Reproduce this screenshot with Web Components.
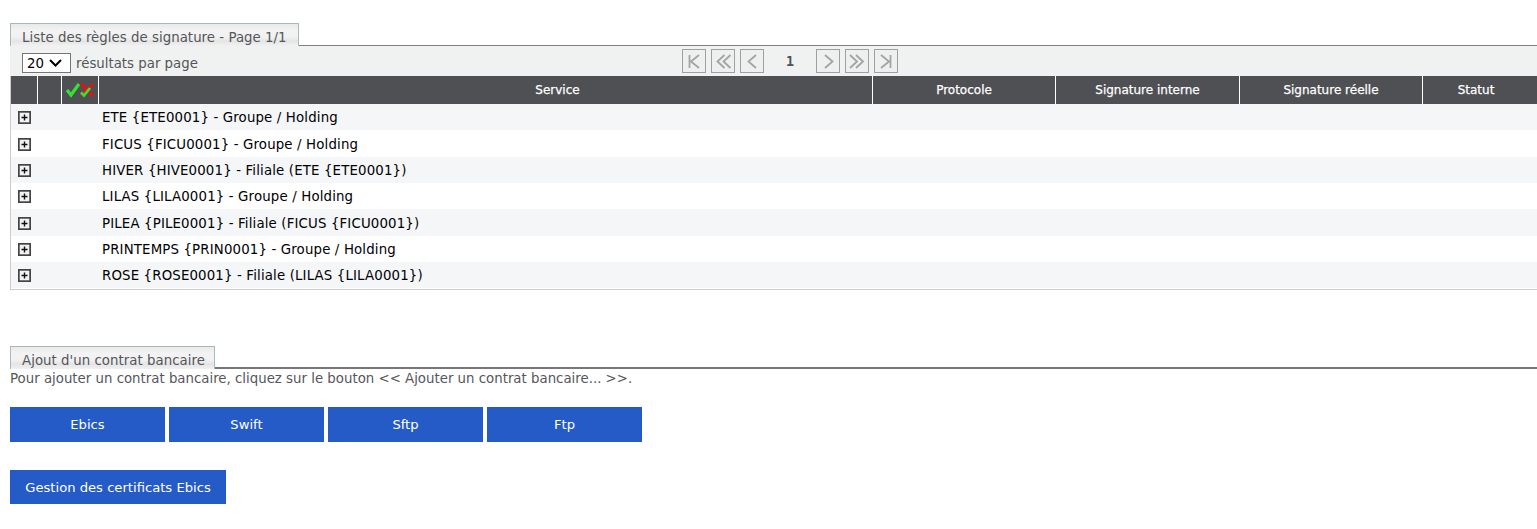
<!DOCTYPE html>
<html lang="fr">
<head>
<meta charset="utf-8">
<title>Règles de signature</title>
<style>
html,body{margin:0;padding:0;background:#fff}
body{padding:23px 0 0 10px;font:13.33px "DejaVu Sans",Verdana,sans-serif;color:#4f5054;height:506px;overflow:hidden}
</style>
</head>
<body>
<onglet-titre largeur="289" style="--ligne:#808080">Liste des règles de signature - Page 1/1</onglet-titre>
<barre-page></barre-page>
<table-regles>
  <ligne-regle>ETE {ETE0001} - Groupe / Holding</ligne-regle>
  <ligne-regle>FICUS {FICU0001} - Groupe / Holding</ligne-regle>
  <ligne-regle>HIVER {HIVE0001} - Filiale (ETE {ETE0001})</ligne-regle>
  <ligne-regle>LILAS {LILA0001} - Groupe / Holding</ligne-regle>
  <ligne-regle>PILEA {PILE0001} - Filiale (FICUS {FICU0001})</ligne-regle>
  <ligne-regle>PRINTEMPS {PRIN0001} - Groupe / Holding</ligne-regle>
  <ligne-regle>ROSE {ROSE0001} - Filiale (LILAS {LILA0001})</ligne-regle>
</table-regles>
<onglet-titre largeur="205" style="margin-top:56px;--ligne:#777;--epais:2px">Ajout d'un contrat bancaire</onglet-titre>
<texte-info>Pour ajouter un contrat bancaire, cliquez sur le bouton &lt;&lt; Ajouter un contrat bancaire... &gt;&gt;.</texte-info>
<groupe-boutons>
  <bouton-bleu>Ebics</bouton-bleu>
  <bouton-bleu>Swift</bouton-bleu>
  <bouton-bleu>Sftp</bouton-bleu>
  <bouton-bleu>Ftp</bouton-bleu>
</groupe-boutons>
<bouton-bleu large>Gestion des certificats Ebics</bouton-bleu>

<script>
class OngletTitre extends HTMLElement{
    constructor(){
        super()
        this.attachShadow({mode:'open'})
    }
    connectedCallback(){
        let w = this.getAttribute("largeur") || 200
        this.shadowRoot.innerHTML=`
        <style>
            :host{display:flex;height:23px;align-items:flex-end;position:relative}
            .tab{box-sizing:border-box;width:${w}px;height:23px;border:1px solid #a9b8bd;border-bottom:0;padding:6px 0 0 11px;
                background:linear-gradient(#e9e9e9,#f3f3f3 30%,#f1f1f1 60%,#e4e4e4 78%,#f0f2f1);font-size:13.33px;line-height:16px;color:#55565a;white-space:nowrap;letter-spacing:.03px}
            .ligne{flex:1;border-bottom:var(--epais,1px) solid var(--ligne,#808080)}
        </style>
        <div class="tab"><slot></slot></div><div class="ligne"></div>
        `
    }
}
customElements.define("onglet-titre",OngletTitre)

const fleches = {
    first:'<path d="M6.500 5v13M16 5l-8 6.500 8 6.500"/>',
    prev2:'<path d="M12.500 5l-7 6.500 7 6.500M18.500 5l-7 6.500 7 6.500"/>',
    prev:'<path d="M15 5l-7.500 6.500L15 18"/>',
    next:'<path d="M8 5l7.500 6.500L8 18"/>',
    next2:'<path d="M4 5l7 6.500-7 6.500M10 5l7 6.500-7 6.500"/>',
    last:'<path d="M6 5l8 6.500L6 18M15.500 5v13"/>'
}

class BoutonPage extends HTMLElement{
    constructor(){
        super()
        this.attachShadow({mode:'open'})
    }
    connectedCallback(){
        this.shadowRoot.innerHTML=`
        <style>
            :host{display:block;box-sizing:border-box;width:24px;height:24px;border:1px solid #a0a0a0;background:#eef0ef}
            svg{display:block;width:22px;height:22px;fill:none;stroke:#a3a3a3;stroke-width:1.8}
        </style>
        <svg viewBox="0 0 22 22">${fleches[this.getAttribute("sens")]}</svg>
        `
    }
}
customElements.define("bouton-page",BoutonPage)

class BarrePage extends HTMLElement{
    constructor(){
        super()
        this.attachShadow({mode:'open'})
    }
    connectedCallback(){
        this.shadowRoot.innerHTML=`
        <style>
            :host{display:block;height:30px;background:#f0f2f1;position:relative;margin-bottom:0}
            .gauche{position:absolute;left:12px;top:7px;display:flex;align-items:center;gap:5px;font-size:13.33px;color:#55565a}
            .choix{box-sizing:border-box;width:49px;height:20px;border:1px solid #767676;background:#fff;color:#000;display:flex;align-items:center;padding-left:4px;gap:5px}
            .choix svg{width:13px;height:8px;fill:none;stroke:#000;stroke-width:2}
            .pages{position:absolute;left:672px;top:3px;display:flex;gap:5px}
            .num{width:42px;text-align:center;font-weight:bold;font-size:13.33px;line-height:25px;color:#4f5054;font-family:"DejaVu Sans Mono","DejaVu Sans",monospace}
        </style>
        <div class="gauche">
            <div class="choix">20<svg viewBox="0 0 13 8"><path d="M1 1l5.500 5.500L12 1"/></svg></div>
            <span>résultats par page</span>
        </div>
        <div class="pages">
            <bouton-page sens="first"></bouton-page>
            <bouton-page sens="prev2"></bouton-page>
            <bouton-page sens="prev"></bouton-page>
            <div class="num">1</div>
            <bouton-page sens="next"></bouton-page>
            <bouton-page sens="next2"></bouton-page>
            <bouton-page sens="last"></bouton-page>
        </div>
        `
    }
}
customElements.define("barre-page",BarrePage)

class TableRegles extends HTMLElement{
    constructor(){
        super()
        this.attachShadow({mode:'open'})
    }
    connectedCallback(){
        this.shadowRoot.innerHTML=`
        <style>
            :host{display:block;border-left:1px solid #ccc;border-bottom:1px solid #ccc;box-sizing:border-box;height:214px}
            .tete{display:grid;grid-template-columns:26px 24px 37px 774px 183px 184px 183px 1fr;height:28px;background:#4f5054;
                color:#fff;font-size:12px;line-height:28px;text-align:center;-webkit-text-stroke:.25px #fff}
            .tete div{border-left:1px solid #fff;box-sizing:border-box}
            .tete div:first-child{border-left:0}
            .service{padding-left:144px}
            .statut{padding-right:8px}
            svg{display:block;margin:5px 0 0 3px}
            ::slotted(ligne-regle:nth-child(odd)){background:#f4f6f8}
        </style>
        <div class="tete">
            <div></div><div></div>
            <div><svg width="32" height="18" viewBox="0 0 32 18">
                <path d="M2 9l4 5 8-11" fill="none" stroke="#33e233" stroke-width="3.200"/>
                <path d="M16 3l12 12M28 3L16 15" fill="none" stroke="#e81010" stroke-width="3"/>
                <path d="M16 11.500l3 3 6-7.500" fill="none" stroke="#33e233" stroke-width="2.800"/>
            </svg></div>
            <div class="service">Service</div><div>Protocole</div><div>Signature interne</div><div>Signature réelle</div><div class="statut">Statut</div>
        </div>
        <slot></slot>
        `
    }
}
customElements.define("table-regles",TableRegles)

class LigneRegle extends HTMLElement{
    constructor(){
        super()
        this.attachShadow({mode:'open'})
    }
    connectedCallback(){
        this.shadowRoot.innerHTML=`
        <style>
            :host{display:flex;align-items:center;box-sizing:border-box;height:26.33px;padding-top:1.3px;color:#000;font-size:13.33px;white-space:nowrap}
            svg{flex:none;width:13px;height:13px;margin-left:7px}
            .nom{margin-left:71px;letter-spacing:.15px}
        </style>
        <svg viewBox="0 0 13 13"><rect x=".85" y=".85" width="11.3" height="11.3" fill="#f2f2f2" stroke="#444" stroke-width="1.700"/><path d="M3.500 6.500h6M6.500 3.500v6" stroke="#111" stroke-width="1.400"/></svg>
        <span class="nom"><slot></slot></span>
        `
    }
}
customElements.define("ligne-regle",LigneRegle)

class TexteInfo extends HTMLElement{
    constructor(){
        super()
        this.attachShadow({mode:'open'})
    }
    connectedCallback(){
        this.shadowRoot.innerHTML=`
        <style>
            :host{display:block;font-size:13.33px;line-height:16px;color:#55565a;padding-top:2px;margin-bottom:20px;white-space:nowrap}
        </style>
        <slot></slot>
        `
    }
}
customElements.define("texte-info",TexteInfo)

class GroupeBoutons extends HTMLElement{
    constructor(){
        super()
        this.attachShadow({mode:'open'})
    }
    connectedCallback(){
        this.shadowRoot.innerHTML=`
        <style>
            :host{display:flex;gap:4px;margin-bottom:28px}
        </style>
        <slot></slot>
        `
    }
}
customElements.define("groupe-boutons",GroupeBoutons)

class BoutonBleu extends HTMLElement{
    constructor(){
        super()
        this.attachShadow({mode:'open'})
    }
    connectedCallback(){
        this.shadowRoot.innerHTML=`
        <style>
            :host{display:flex;align-items:center;justify-content:center;box-sizing:border-box;width:155px;height:35px;background:#255bc6;color:#fff;font-size:13.15px}
            :host([large]){width:216px;height:34px}
        </style>
        <slot></slot>
        `
    }
}
customElements.define("bouton-bleu",BoutonBleu)
</script>
</body>
</html>
